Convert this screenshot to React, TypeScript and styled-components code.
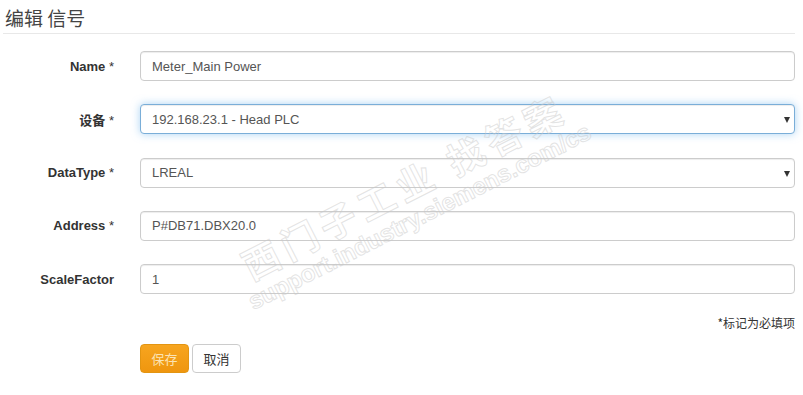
import React from 'react';
import styled, { createGlobalStyle } from 'styled-components';

const GlobalStyle = createGlobalStyle`
  html, body {
    margin: 0;
    padding: 0;
    background: #fff;
  }
  body {
    font-family: "Liberation Sans", Arial, "Noto Sans CJK SC", sans-serif;
    font-size: 13px;
    color: #333;
  }
`;

const Page = styled.div`
  position: relative;
  width: 803px;
  height: 395px;
  overflow: hidden;
  padding: 0 8px 0 0;
  box-sizing: border-box;
`;

const Header = styled.h3`
  margin: 0 0 0 3px;
  padding: 6px 0 0 2px;
  height: 27px;
  font-family: "Noto Sans CJK SC", sans-serif;
  font-size: 19px;
  font-weight: 400;
  line-height: 24px;
  color: #444;
  border-bottom: 1px solid #e8e8e8;
`;

const Form = styled.form`
  display: flex;
  flex-direction: column;
  gap: 23.25px;
  margin-top: 17px;
`;

const Row = styled.div`
  display: grid;
  grid-template-columns: 140px 1fr;
  align-items: center;
  height: 30px;
`;

const Label = styled.label`
  text-align: right;
  padding-right: 26px;
  font-weight: 700;
  color: #333;
  font-family: "Liberation Sans", "Noto Sans CJK SC", sans-serif;
`;

const Star = styled.span`
  font-weight: 400;
`;

const Field = styled.div<{ $focus?: boolean }>`
  position: relative;
  height: 30px;
  box-sizing: border-box;
  border: 1px solid ${({ $focus }) => ($focus ? '#7aaed8' : '#ccc')};
  border-radius: 4px;
  background: #fff;
  padding: 0 11px;
  display: flex;
  align-items: center;
  color: #555;
  font-size: 13px;
  box-shadow: ${({ $focus }) =>
    $focus
      ? 'inset 0 1px 1px rgba(0,0,0,.075), 0 0 8px rgba(102,175,233,.55)'
      : 'inset 0 1px 1px rgba(0,0,0,.075)'};
`;

const Arrow = styled.span`
  position: absolute;
  right: 4px;
  top: 12px;
  width: 0;
  height: 0;
  border-left: 3.5px solid transparent;
  border-right: 3.5px solid transparent;
  border-top: 6px solid #333;
`;

const Note = styled.div`
  text-align: right;
  margin-top: 20px;
  font-family: "Noto Sans CJK SC", sans-serif;
  font-size: 12px;
  color: #333;
`;

const Actions = styled.div`
  display: flex;
  gap: 3px;
  margin: 13px 0 0 140px;
`;

const Button = styled.button<{ $primary?: boolean }>`
  height: 29px;
  width: 49px;
  box-sizing: border-box;
  border-radius: 4px;
  font-family: "Noto Sans CJK SC", sans-serif;
  font-size: 13px;
  padding: 0;
  border: 1px solid ${({ $primary }) => ($primary ? '#e39512' : '#ccc')};
  background: ${({ $primary }) =>
    $primary ? 'linear-gradient(#f7a51f, #ef960f)' : '#fff'};
  color: ${({ $primary }) => ($primary ? '#fbe3b4' : '#333')};
`;

const Watermark = styled.div`
  position: absolute;
  left: 410px;
  top: 198px;
  transform: translate(-50%, -50%) rotate(-27deg);
  text-align: center;
  pointer-events: none;
  white-space: nowrap;
  color: transparent;
  -webkit-text-stroke: 1px rgba(200, 200, 200, 0.5);
`;

const MarkCn = styled.div`
  font-family: "Noto Sans CJK SC", sans-serif;
  font-size: 37px;
  font-weight: 700;
  letter-spacing: 6px;
  line-height: 42px;
`;

const MarkUrl = styled.div`
  font-family: "Liberation Sans", sans-serif;
  font-size: 24px;
  font-weight: 700;
  line-height: 28px;
`;

type FieldDef = { label: string; required: boolean; value: string; select?: boolean; focus?: boolean };

const fields: FieldDef[] = [
  { label: 'Name', required: true, value: 'Meter_Main Power' },
  { label: '设备', required: true, value: '192.168.23.1 - Head PLC', select: true, focus: true },
  { label: 'DataType', required: true, value: 'LREAL', select: true },
  { label: 'Address', required: true, value: 'P#DB71.DBX20.0' },
  { label: 'ScaleFactor', required: false, value: '1' },
];

export default function App() {
  return (
    <Page>
      <GlobalStyle />
      <Header>编辑 信号</Header>
      <Form>
        {fields.map((f) => (
          <Row key={f.label}>
            <Label>
              {f.label}
              {f.required && <Star> *</Star>}
            </Label>
            <Field $focus={f.focus}>
              {f.value}
              {f.select && <Arrow />}
            </Field>
          </Row>
        ))}
      </Form>
      <Note>*标记为必填项</Note>
      <Actions>
        <Button $primary type="button">保存</Button>
        <Button type="button">取消</Button>
      </Actions>
      <Watermark>
        <MarkCn>西门子工业 找答案</MarkCn>
        <MarkUrl>support.industry.siemens.com/cs</MarkUrl>
      </Watermark>
    </Page>
  );
}
